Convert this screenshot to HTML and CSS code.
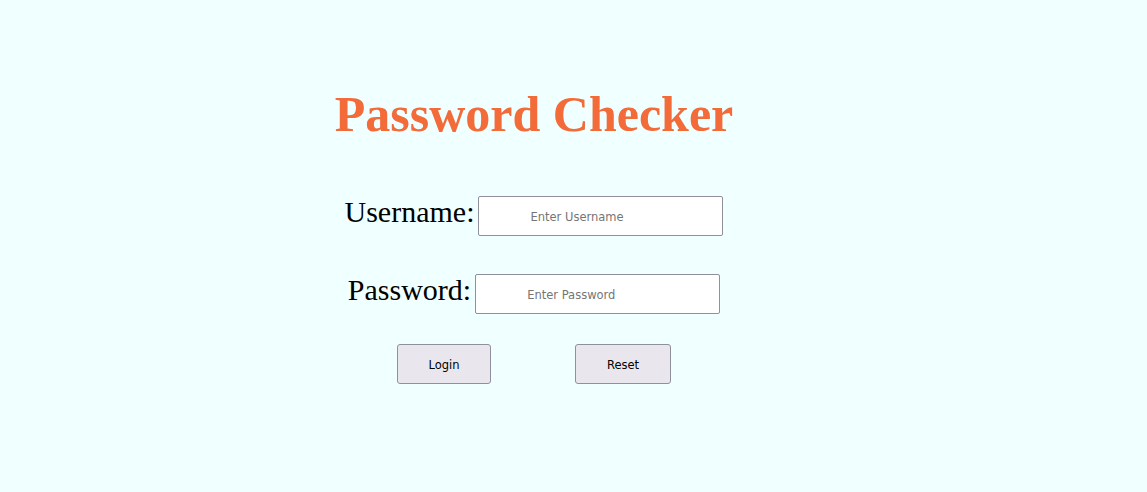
FILE: index.html
```html
<!DOCTYPE html>
<html>
<head>
<meta charset="utf-8">
<link rel="stylesheet" href="styles.css">
</head>
<body>
<div class="page">
  <h1 class="title">Password Checker</h1>
  <form class="form">
    <div class="row"><label class="label" for="u">Username:</label><input class="field" id="u" type="text" placeholder="Enter Username"></div>
    <div class="row"><label class="label" for="p">Password:</label><input class="field" id="p" type="password" placeholder="Enter Password"></div>
    <div class="buttons">
      <button type="button" class="btn btn-login">Login</button>
      <button type="reset" class="btn btn-reset">Reset</button>
    </div>
  </form>
</div>
</body>
</html>
```
FILE: styles.css
```css
html, body {
  margin: 0;
  padding: 0;
  background: #f0ffff;
}
.page {
  padding: 0 87px 0 8px;
  text-align: center;
  font-family: "Liberation Serif", "Times New Roman", serif;
}
.title {
  margin: 0;
  padding-top: 85px;
  font-size: 50px;
  line-height: 58px;
  font-weight: bold;
  color: #f26b38;
}
.form {
  margin-top: 49px;
}
.row {
  height: 40px;
  margin-bottom: 38px;
  font-size: 30px;
  line-height: 40px;
}
.label {
  color: #000;
}
.field {
  box-sizing: border-box;
  width: 245px;
  height: 40px;
  margin-left: 4px;
  padding: 2px 0 0 51px;
  border: 1px solid #8f8f9d;
  border-radius: 2px;
  background: #fff;
  font-family: "DejaVu Sans", Verdana, sans-serif;
  font-size: 11.5px;
  vertical-align: 1px;
}
.field::placeholder {
  color: #757575;
}
.buttons {
  display: flex;
  justify-content: center;
  gap: 84px;
  margin-top: -4px;
}
.btn {
  box-sizing: border-box;
  height: 40px;
  padding-top: 2px;
  border: 1px solid #8f8f9d;
  border-radius: 3px;
  background: #e9e7ed;
  color: #000;
  font-family: "DejaVu Sans", Verdana, sans-serif;
  font-size: 11.5px;
}
.btn-login { width: 94px; }
.btn-reset { width: 96px; }
```
